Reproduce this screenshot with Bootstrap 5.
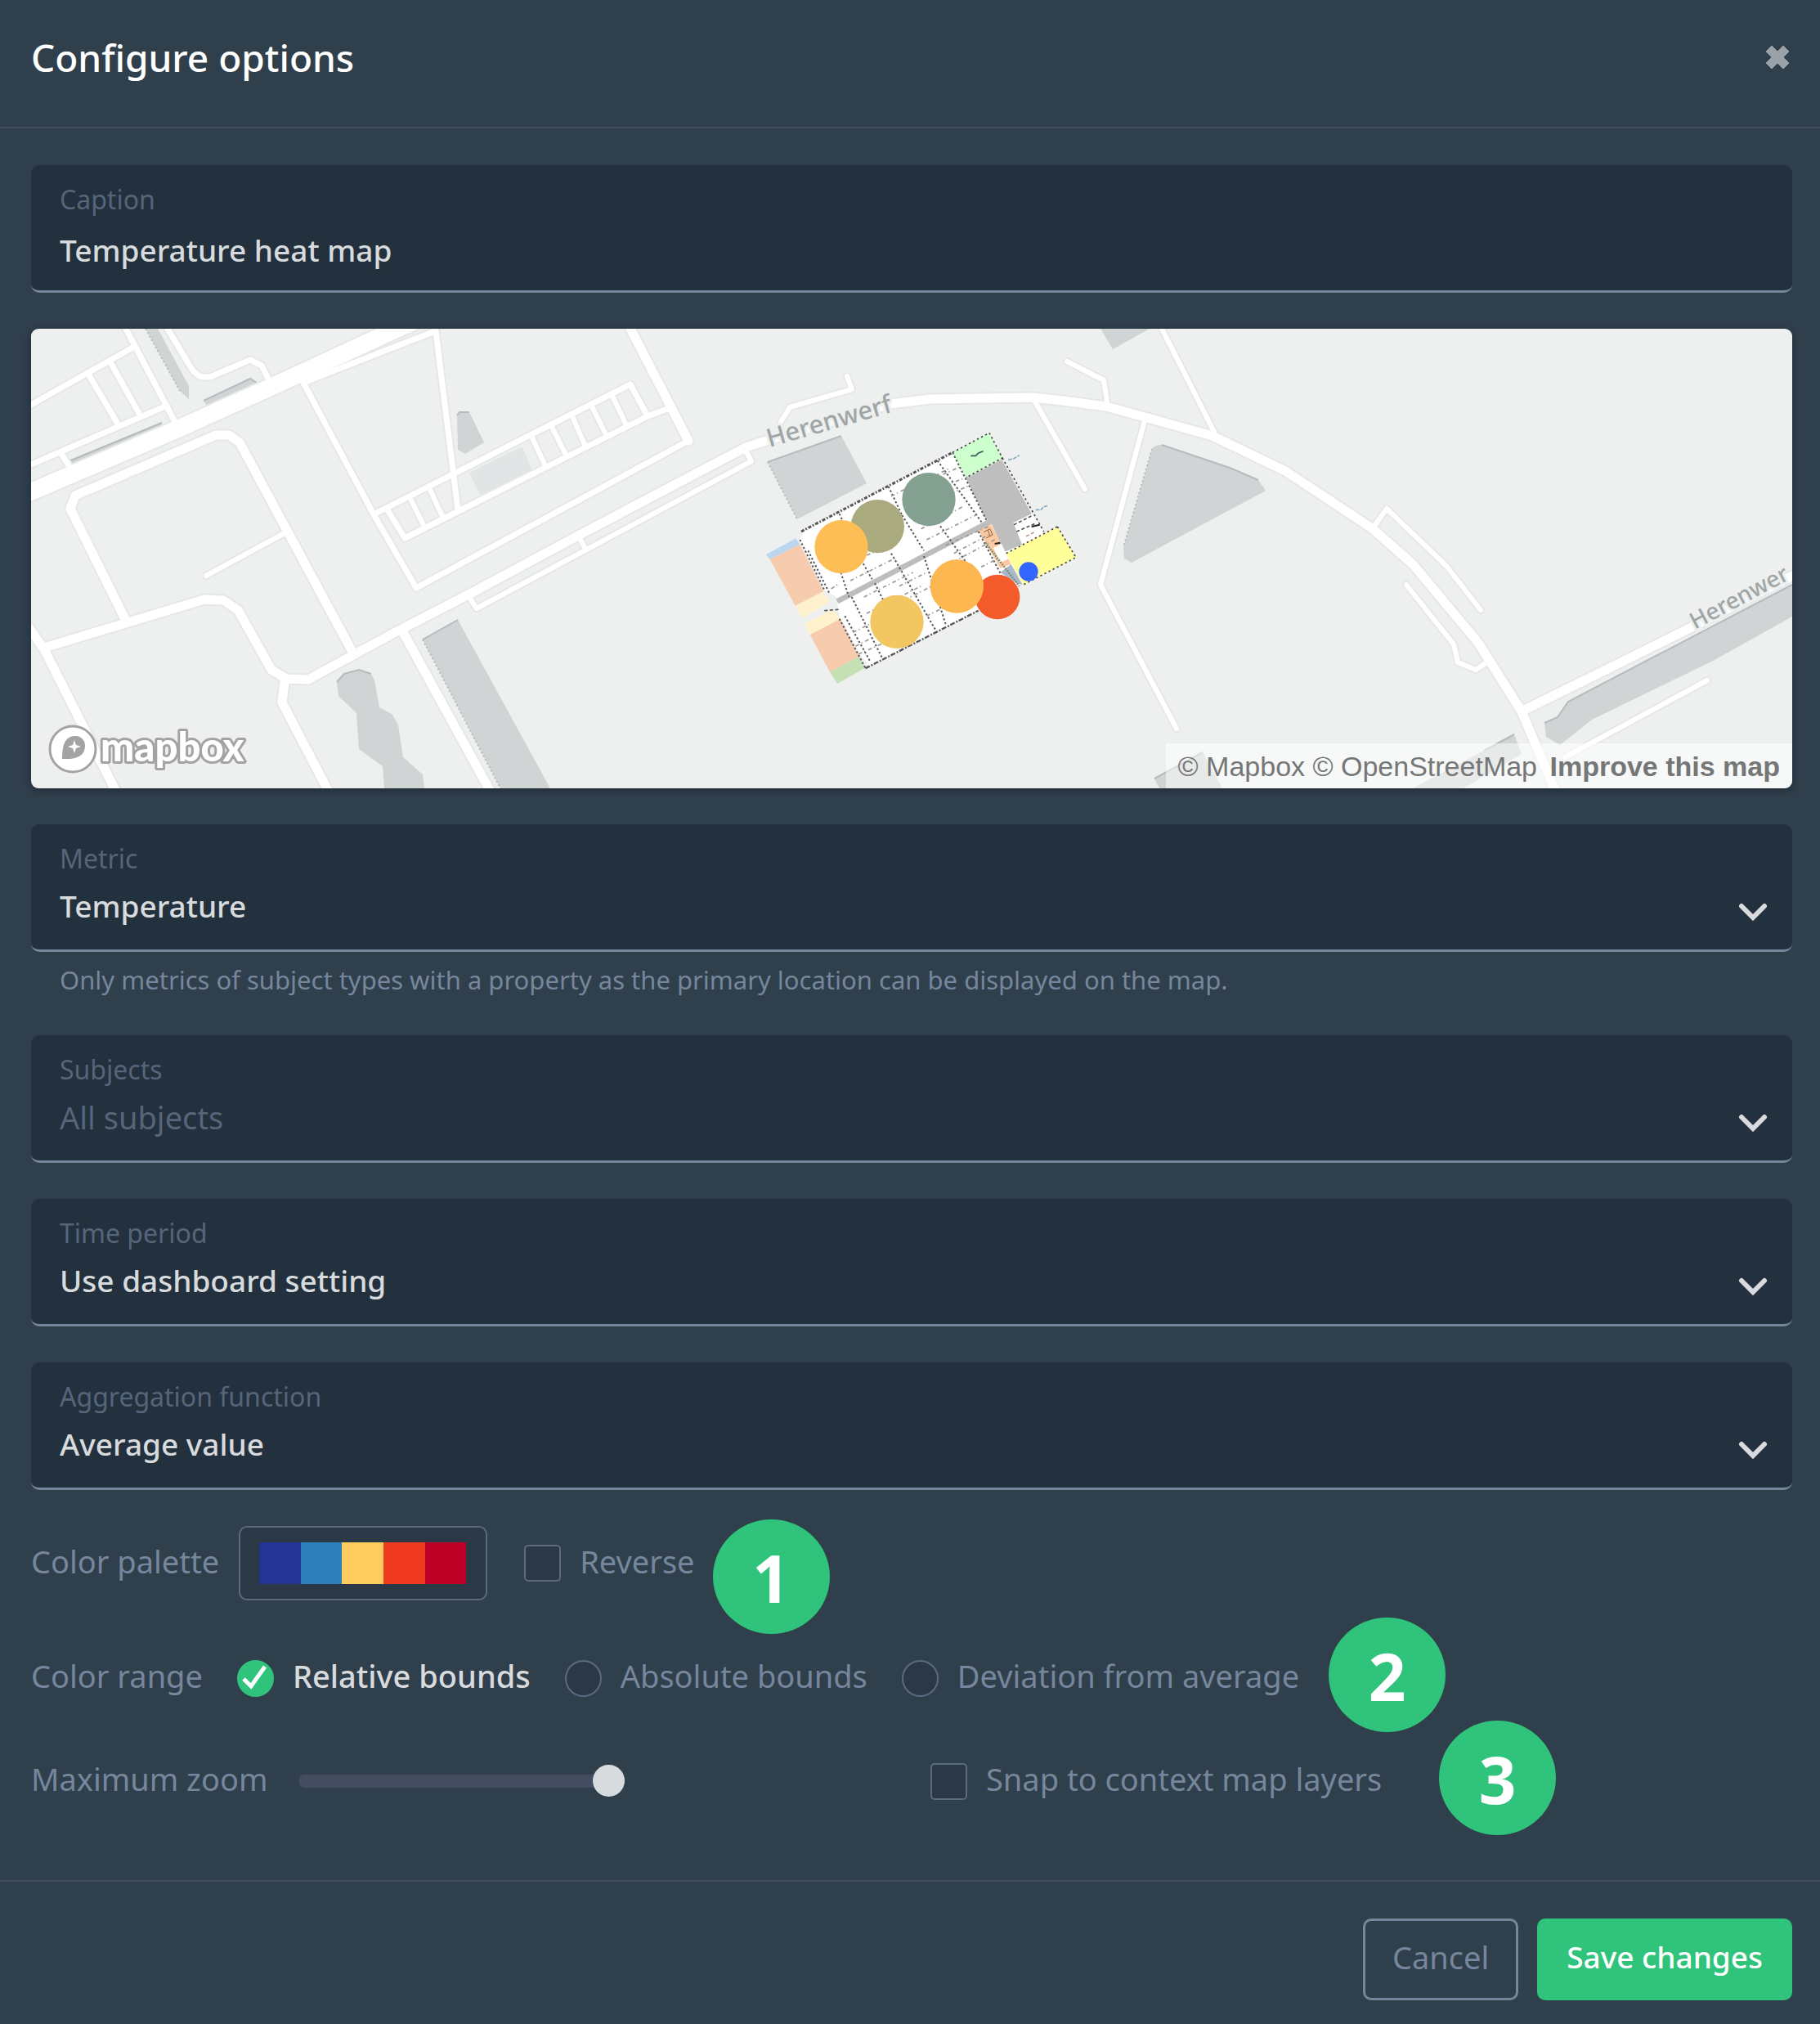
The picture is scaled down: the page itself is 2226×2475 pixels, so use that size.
<!DOCTYPE html>
<html lang="en">
<head>
<meta charset="utf-8">
<meta name="viewport" content="width=device-width, initial-scale=1">
<title>Configure options</title>
<link href="https://cdn.jsdelivr.net/npm/bootstrap@5.3.0/dist/css/bootstrap.min.css" rel="stylesheet">
<style>
  :root {
    --panel: #303f4c;
    --well: #23303d;
    --line: #424d5f;
    --muted: #76869c;
    --dim: #56657a;
    --bright: #d8dbde;
    --accent: #30c37b;
  }
  body { background: var(--panel); color: var(--muted); font-family: "Noto Sans", sans-serif; font-size: 38px; line-height: 46px; }
  .dialog-head { padding: 0 34px 15px 38px; height: 157px; border-bottom: 2px solid var(--line); }
  .dialog-head h1 { font-size: 46px; line-height: 56px; font-weight: 500; color: #fff; }
  .close-btn { background: none; border: 0; padding: 0 3px; line-height: 0; color: #9aa2a9; }
  .dialog-main { padding: 45px 34px 95px 38px; }
  .stack { gap: 44px; }
  .option-field { position: relative; height: 156px; background: var(--well); border-bottom: 3px solid var(--muted); border-radius: 10px; }
  .option-field label { display: block; padding: 20px 35px 0; font-size: 32px; line-height: 44px; color: var(--dim); }
  .option-field input, .option-field select { display: block; width: 100%; height: 88px; padding: 0 35px 10px; border: 0; background: none; appearance: none; outline: 0; color: var(--bright); font-weight: 500; font-size: 37px; line-height: 56px; border-radius: 0 0 10px 10px; }
  .option-field select { padding-bottom: 17px; }
  .option-field .empty { color: var(--dim); font-weight: 400; font-size: 38px; }
  .chevron { position: absolute; right: 30px; bottom: 33px; pointer-events: none; }
  .hint { padding: 12px 35px 0; font-size: 31px; line-height: 44px; margin-bottom: 2px; }
  .map-box { position: relative; height: 562px; border-radius: 9px; overflow: hidden; background: #eef0f0; box-shadow: 0 3px 8px rgba(15, 25, 35, .5); }
  .map-box svg { display: block; width: 100%; height: 100%; }
  .map-credit { position: absolute; right: 0; bottom: 0; height: 55px; padding: 0 15px; background: rgba(255, 255, 255, .5); font-family: "Liberation Sans", sans-serif; font-size: 34px; line-height: 56px; white-space: nowrap; }
  .map-credit a { color: #757676; text-decoration: none; }
  .map-credit a:last-child { font-weight: 700; margin-left: 6px; }
  .opt-text { padding-bottom: 6px; white-space: nowrap; }
  .opt-row { min-height: 46px; }
  .range-row { gap: 42px; margin-top: 69px; }
  .zoom-row { --bs-gutter-x: 46px; margin-top: 74px; }
  .zoom-pair { gap: 38px; }
  .choice { position: relative; gap: 23px; }
  .palette + .choice { margin-left: 45px; }
  .choice .form-check-input { width: 45px; height: 45px; margin: 0; flex: none; background-color: #2b3947; border: 2px solid #5b6b7f; }
  .choice .form-check-input[type=checkbox] { border-radius: 5px; }
  .choice .form-check-input[type=radio]:checked { background-color: var(--accent); border-color: var(--accent); background-size: 45px 45px; background-position: center; background-image: url("data:image/svg+xml,%3Csvg xmlns='http://www.w3.org/2000/svg' viewBox='0 0 45 45'%3E%3Cpath d='M8 23l9 9L34 8' fill='none' stroke='%23fff' stroke-width='5'/%3E%3C/svg%3E"); }
  .choice input:checked + label { color: var(--bright); font-weight: 500; }
  .palette { display: flex; width: 304px; height: 91px; padding: 18px 24px 18px 23px; background: #2b3947; border: 2px solid #5b6b7f; border-radius: 10px; }
  .palette span { flex: 1; height: 51px; }
  .step-pin { position: absolute; left: 100%; top: calc(50% - 4px); width: 143px; height: 140px; transform: translateY(-50%); border-radius: 50%; background: var(--accent); color: #fff; font: 700 80px/142px "Noto Sans", sans-serif; text-align: center; }
  .pin-low { margin: 20px 0 0 22px; }
  .pin-near { margin-left: 36px; }
  .pin-far { margin-left: 70px; }
  .zoom-range { appearance: none; width: 398px; height: 40px; margin: 0; background: none; }
  .zoom-range::-webkit-slider-runnable-track { height: 16px; border-radius: 6px; background: #434d5f; }
  .zoom-range::-webkit-slider-thumb { appearance: none; width: 39px; height: 39px; margin-top: -12px; border: 0; border-radius: 50%; background: var(--bright); }
  .dialog-foot { padding: 45px 34px 29px; gap: 23px; border-top: 2px solid var(--line); }
  .dialog-foot .btn { height: 100px; padding: 0 33px 6px; border-width: 3px; border-radius: 10px; font-size: 38px; }
  .dialog-foot .btn-cancel { color: var(--muted); border-color: var(--muted); }
  .dialog-foot .btn-save { color: #fff; background: var(--accent); border-color: var(--accent); font-size: 37px; font-weight: 500; }
</style>
</head>
<body>
<header class="dialog-head d-flex align-items-center justify-content-between">
  <h1 class="m-0">Configure options</h1>
  <button type="button" class="close-btn" aria-label="Close">
    <svg width="30" height="30" viewBox="0 0 30 30"><path d="M8 1l7 7 7-7 7 7-7 7 7 7-7 7-7-7-7 7-7-7 7-7-7-7z" fill="currentColor" stroke="currentColor" stroke-linejoin="round"/></svg>
  </button>
</header>

<main class="dialog-main">
  <div class="stack d-flex flex-column">
    <div class="option-field">
      <label for="caption">Caption</label>
      <input id="caption" type="text" value="Temperature heat map">
    </div>

    <div class="map-box">
      <svg viewBox="38 402 2154 562" preserveAspectRatio="xMidYMid slice" role="img" aria-label="Map">
        <style>
          .edge { --casing: 4px; stroke: #e6e8e8 } .face { --casing: 0px; stroke: #fff }
          .lane-s { stroke-width: calc(6px + var(--casing)) } .lane-m { stroke-width: calc(7px + var(--casing)) }
          .lane-l { stroke-width: calc(11px + var(--casing)) } .lane-xl { stroke-width: calc(21px + var(--casing)) }
          .street { font-family: "Noto Sans", sans-serif; font-weight: 500; font-size: 31px; fill: #a0a5a6; stroke: #eef0f0; stroke-width: 6px; paint-order: stroke; stroke-linejoin: round }
          .street-far { font-size: 28px }
          .brand { font-family: Lato, sans-serif; font-weight: 900; font-size: 49px; fill: #fff; stroke: #a3a3a3; stroke-width: 6px; paint-order: stroke; stroke-linejoin: round }
        </style>
        <defs>
          <g id="streetnet" fill="none" stroke-linejoin="round" stroke-linecap="round">
            <path class="lane-m" d="M38 495L164 424M154 402L214 516M109 459L145 520M135 443L171 507M38 568L204 496M75 555L86 572M205 402L232 447Q240 461 250 461L257 461L306 440L320 447L329 465M371 468L532 405M371 468L457 629L509 719L842 539M457 629L771 470L792 509M473 622L495 658L792 509L819 499M533 405L560 623"/>
            <path class="lane-s" d="M252 704L346 653M501 608L519 644M525 597L542 633M650 533L667 570M675 522L693 558M700 509L716 546M724 497L742 533M749 484L766 520M575 732L583 744L919 564L912 551M710 660L716 671M955 516L966 498L1042 476L1036 460M1263 486L1327 598M1305 442L1350 465L1354 491M1421 402L1485 528M1400 514L1346 715L1439 891M1681 643L1696 622L1769 692L1811 746M1720 715L1778 788L1783 810L1805 819L1817 811M2088 832L1914 926"/>
            <path class="lane-l" d="M154 759L86 622L92 606L264 532L280 532L293 541L432 799M54 792L250 733L273 734L291 746L332 819L350 830L377 831L432 801L480 775L573 727L709 654L912 547L937 539L1089 494L1137 488L1263 486L1300 490L1353 497L1483 533L1572 576L1678 646L1728 690L1808 786L1861 870L1901 964M30 760L54 794L145 974M348 834L345 859L403 970M494 775L601 970M842 539L766 392M1861 870L2085 759L2210 695"/>
            <path class="lane-xl" d="M20 609L214 526L332 473L475 407L560 368"/>
          </g>
        </defs>
        <g fill="#d0d4d5">
          <path d="M178 402H193L231 472V488L220 478ZM249 490L306 463L314 468L254 497ZM84 564L198 517V520L88 569Z"/>
          <path d="M412 834L421 824L439 819L454 824L458 832L464 865L479 873L487 886L493 926L517 947L519 964H470L468 937L439 916L436 872L414 851Z"/>
          <path d="M517 782L560 758L673 964H612ZM559 508L562 504H574L592 541L569 555L560 550Z"/>
          <path d="M574 578L639 546L651 576L587 605Z" fill="#e1e5e6"/>
          <path d="M939 565L1029 533L1060 591L975 635ZM1346 402H1406L1361 427Z"/>
          <path d="M1409 549Q1412 544 1421 544L1504 572L1539 587L1548 600L1384 688L1375 683L1374 669Z"/>
          <path d="M1889 884L1905 877L1918 858L2192 715V754L2097 807L1947 880L1908 911L1891 901Z"/>
          <path d="M1728 964L1852 898L1861 922L1790 964ZM1412 952L1471 920L1495 964H1418Z"/>
        </g>
        <g fill="none" stroke="#b4bcbe" stroke-width="2">
          <path d="M84 564L198 517M249 490L306 463L314 468M517 782L560 758M939 565L1029 533M412 834L421 824L439 819L454 824M1421 544L1504 572L1539 587M1889 884L1905 877L1918 858L2192 715M1412 952L1471 920M1815 918L1852 898M559 508L562 504H574"/>
          <path d="M178 402L220 478M517 782L612 964M939 565L975 635M1409 549L1374 669" stroke-dasharray="2 3"/>
        </g>
        <use href="#streetnet" class="edge"/>
        <use href="#streetnet" class="face"/>
        <text class="street" transform="translate(941 547) rotate(-16)">Herenwerf</text>
        <text class="street street-far" transform="translate(2073 770) rotate(-28)">Herenwer</text>

        <!-- floor plan -->
        <g transform="translate(900 500) scale(.33333)">
          <path d="M232 480L250 450L795 160L860 250L1085 385L1130 450L1050 640L890 740L490 945L460 905L380 760L370 690L325 665Z" fill="#fff"/>
          <path d="M110 535L220 475L235 497L125 552Z" fill="#bcd6ef"/>
          <path d="M125 552L235 497L322 670L218 722ZM272 828L383 770L452 908L345 965Z" fill="#f7cbad"/>
          <path d="M218 722L322 670L345 708L243 768ZM252 790L355 735L383 770L272 828Z" fill="#fff1cc"/>
          <path d="M345 965L452 908L475 950L372 1008Z" fill="#c5e0b3"/>
          <path d="M845 255L975 185L1085 385L1018 418L1050 497L985 525L935 415L915 400Z" fill="#bebebe"/>
          <path d="M795 160L930 88L978 180L845 252Z" fill="#cfc"/>
          <path d="M890 445L935 420L1010 570L970 585Z" fill="#fcc9a0"/>
          <path d="M945 510L975 495L1000 550L970 565Z" fill="#fff"/>
          <path d="M970 600L1010 570L1052 645L1030 640Z" fill="#a9b8cb"/>
          <path d="M992 530L1180 432L1248 545L1055 645Z" fill="#ff9"/>
          <path d="M372 706L935 412" stroke="#bdbdbd" stroke-width="20"/>
          <g fill="none" stroke="#555">
            <path d="M240 450L795 160" stroke-width="9" stroke-dasharray="12 6 5 6"/>
            <path d="M795 160L930 88L978 180L845 252M978 180L1130 450M1180 432L1248 545L1055 645M992 530L1180 432" stroke="#444" stroke-width="5" stroke-dasharray="7 10"/>
            <path d="M475 952L890 740" stroke-width="7" stroke-dasharray="18 6 6 5"/>
            <path d="M235 480L325 665M265 520L345 680M380 385L425 480M460 555L500 625M560 285L610 390M610 390L690 520M740 190L905 420M385 600L415 690M425 690L540 920M510 640L550 720M570 530L735 815M690 540L770 790M750 430L850 570M890 450L990 640M380 770L475 950M400 760L495 930M795 160L920 410" stroke-width="6" stroke-dasharray="7 8"/>
            <path d="M410 570L560 500M420 630L590 545M470 690L650 600M480 750L680 650M430 820L530 770M440 870L530 825M450 900L540 860M600 650L700 600M620 700L740 640M700 760L760 730M700 480L880 390M680 440L830 360M770 500L930 430M800 530L940 455M800 560L950 480M900 580L970 545M760 240L830 210M770 280L850 250M790 310L860 280M570 320L650 280M350 660L380 640M500 480L530 470M720 250L780 220" stroke="#999" stroke-width="5" stroke-dasharray="14 9 4 12"/>
            <path d="M325 740L385 735M1020 425L1090 390M1030 450L1100 420" stroke="#555" stroke-width="5" stroke-dasharray="12 8"/>
            <path d="M910 452L932 440L942 462L918 474M924 444L934 468" stroke="#86664f" stroke-width="3"/>
            <path d="M950 495L970 491M1085 432L1115 425" stroke="#222" stroke-width="6"/>
            <path d="M862 172L880 172L890 162L908 155" stroke="#355e58" stroke-width="5"/>
            <path d="M1000 187L1020 182L1040 170M1100 370L1120 370L1130 358L1143 356" stroke="#8ab" stroke-width="5" stroke-dasharray="14 4"/>
            <path d="M1065 467L1100 450" stroke="#b98" stroke-width="5" stroke-dasharray="12 8"/>
            <path d="M915 490L1040 650" stroke="#7a8c70" stroke-width="7" stroke-dasharray="6 4"/>
          </g>
          <circle cx="520" cy="431" r="98" fill="#a9aa7d"/>
          <circle cx="387" cy="506" r="98" fill="#fdbf55"/>
          <circle cx="708" cy="332" r="98" fill="#84a090"/>
          <circle cx="591" cy="781" r="98" fill="#f2c761"/>
          <circle cx="960" cy="690" r="82" fill="#f45b2a"/>
          <circle cx="811" cy="651" r="98" fill="#fdb750"/>
          <circle cx="1074" cy="597" r="35" fill="#36f"/>
        </g>

        <circle cx="89" cy="916" r="28" fill="#fff" stroke="#a3a3a3" stroke-width="3"/>
        <path d="M76 928C76 912 79 900 92 900C100 900 104 906 104 912C104 924 94 929 76 928Z" fill="#a3a3a3"/>
        <path d="M91 905L93 911L99 913L93 915L91 921L89 915L83 913L89 911Z" fill="#fff"/>
        <text class="brand" x="123" y="931">mapbox</text>
      </svg>
      <div class="map-credit"><a href="#">© Mapbox</a> <a href="#">© OpenStreetMap</a> <a href="#">Improve this map</a></div>
    </div>

    <div>
      <div class="option-field">
        <label for="metric">Metric</label>
        <select id="metric"><option>Temperature</option></select>
        <svg class="chevron" width="36" height="24" viewBox="0 0 36 24"><path d="M4 4l14 14L32 4" fill="none" stroke="#d8dbde" stroke-width="6" stroke-linecap="round"/></svg>
      </div>
      <p class="hint">Only metrics of subject types with a property as the primary location can be displayed on the map.</p>
    </div>

    <div class="option-field">
      <label for="subjects">Subjects</label>
      <select id="subjects" class="empty"><option>All subjects</option></select>
      <svg class="chevron" width="36" height="24" viewBox="0 0 36 24"><path d="M4 4l14 14L32 4" fill="none" stroke="#d8dbde" stroke-width="6" stroke-linecap="round"/></svg>
    </div>

    <div class="option-field">
      <label for="period">Time period</label>
      <select id="period"><option>Use dashboard setting</option></select>
      <svg class="chevron" width="36" height="24" viewBox="0 0 36 24"><path d="M4 4l14 14L32 4" fill="none" stroke="#d8dbde" stroke-width="6" stroke-linecap="round"/></svg>
    </div>

    <div class="option-field">
      <label for="aggregation">Aggregation function</label>
      <select id="aggregation"><option>Average value</option></select>
      <svg class="chevron" width="36" height="24" viewBox="0 0 36 24"><path d="M4 4l14 14L32 4" fill="none" stroke="#d8dbde" stroke-width="6" stroke-linecap="round"/></svg>
    </div>

    <div class="opt-row d-flex align-items-center">
      <span class="opt-text me-4" id="palette-label">Color palette</span>
      <button type="button" class="palette" aria-labelledby="palette-label">
        <span style="background:#253494"></span><span style="background:#2c7fb8"></span><span style="background:#fecc5c"></span><span style="background:#f03b20"></span><span style="background:#bd0026"></span>
      </button>
      <div class="choice d-flex align-items-center">
        <input class="form-check-input" type="checkbox" id="reverse">
        <label class="opt-text" for="reverse">Reverse</label>
        <span class="step-pin pin-low">1</span>
      </div>
    </div>
  </div>

  <div class="opt-row range-row d-flex align-items-center">
    <span class="opt-text">Color range</span>
    <div class="choice d-flex align-items-center">
      <input class="form-check-input" type="radio" name="range" id="relative" checked>
      <label class="opt-text" for="relative">Relative bounds</label>
    </div>
    <div class="choice d-flex align-items-center">
      <input class="form-check-input" type="radio" name="range" id="absolute">
      <label class="opt-text" for="absolute">Absolute bounds</label>
    </div>
    <div class="choice d-flex align-items-center">
      <input class="form-check-input" type="radio" name="range" id="deviation">
      <label class="opt-text" for="deviation">Deviation from average</label>
      <span class="step-pin pin-near">2</span>
    </div>
  </div>

  <div class="row zoom-row align-items-center">
    <div class="zoom-pair col-6 d-flex align-items-center">
      <label class="opt-text" for="zoom">Maximum zoom</label>
      <input class="zoom-range" type="range" id="zoom" min="0" max="22" value="22">
    </div>
    <div class="col-6 d-flex">
      <div class="choice d-flex align-items-center">
        <input class="form-check-input" type="checkbox" id="snap">
        <label class="opt-text" for="snap">Snap to context map layers</label>
        <span class="step-pin pin-far">3</span>
      </div>
    </div>
  </div>
</main>

<footer class="dialog-foot d-flex justify-content-end">
  <button type="button" class="btn btn-cancel">Cancel</button>
  <button type="button" class="btn btn-save">Save changes</button>
</footer>
<script src="https://cdn.jsdelivr.net/npm/bootstrap@5.3.0/dist/js/bootstrap.bundle.min.js"></script>
</body>
</html>
